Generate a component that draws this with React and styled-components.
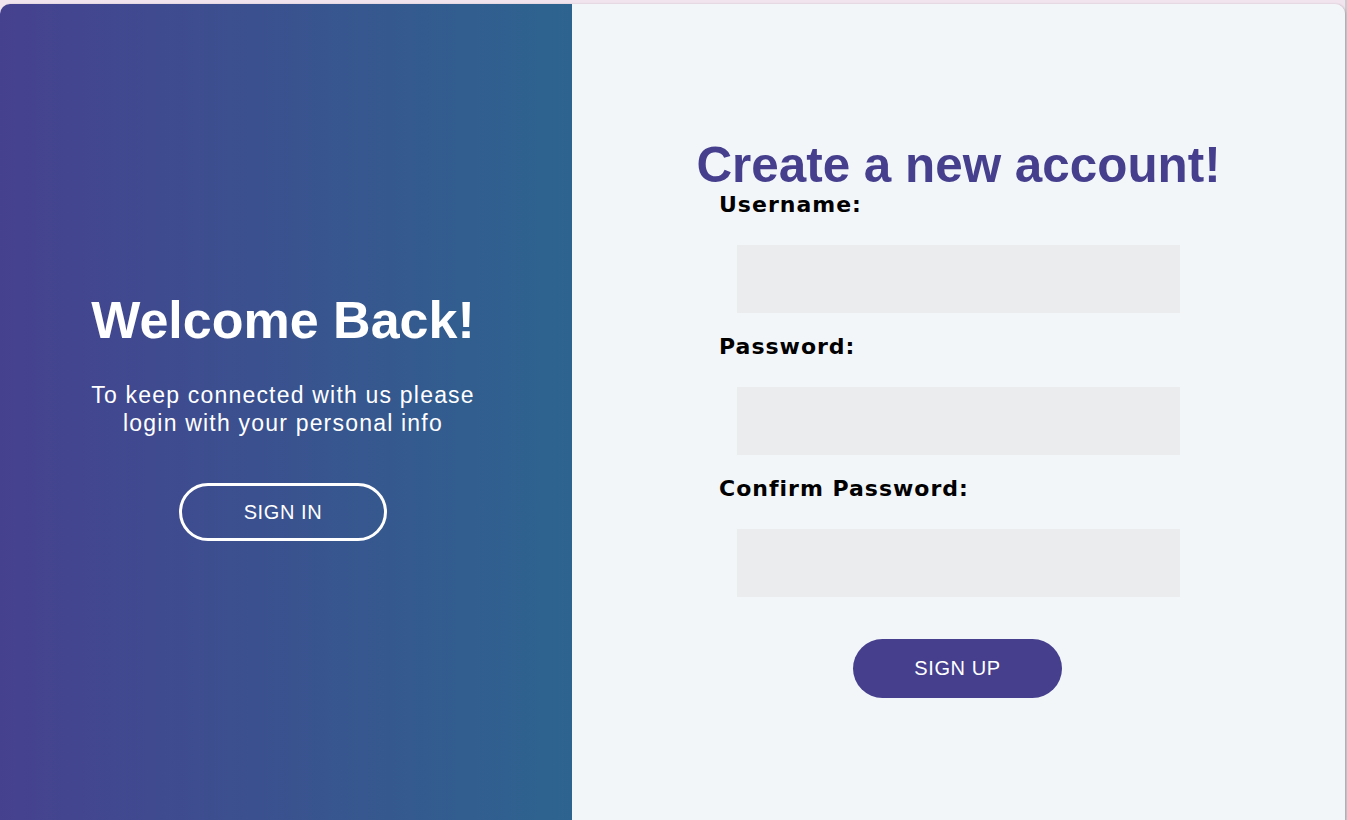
import React from "react";
import styled, { createGlobalStyle } from "styled-components";

const Global = createGlobalStyle`
  html, body { margin: 0; padding: 0; }
  body {
    background: #f2e4ef;
    overflow: hidden;
    font-family: "Liberation Sans", Arial, sans-serif;
  }
  * { box-sizing: border-box; }
`;

const Page = styled.div`
  padding-top: 4px;
  width: 1347px;
  height: 820px;
  background: linear-gradient(to right, #f2e4ef 0, #f2e4ef 1345px, #c9cccf 1345px);
`;

const Card = styled.div`
  width: 1345px;
  height: 825px;
  border-radius: 10px;
  overflow: hidden;
  display: grid;
  grid-template-columns: 572px 1fr;
  box-shadow: 1px 0 2px rgba(0, 0, 0, 0.18);
`;

const Overlay = styled.section`
  background: linear-gradient(to right, #46418f, #2d648f);
  color: #fff;
  display: flex;
  flex-direction: column;
  align-items: center;
  justify-content: center;
  padding-right: 6px;
  text-align: center;
`;

const Title = styled.h1`
  margin: 0 -40px;
  text-align: center;
  white-space: nowrap;
  font-family: "Liberation Sans", Arial, sans-serif;
  font-weight: 700;
  font-size: ${(p) => p.$size || 52}px;
  line-height: 57px;
  color: ${(p) => p.$color || "#fff"};
`;

const Lead = styled.p`
  margin: 32px 0 46px;
  font-size: 23px;
  line-height: 28px;
  letter-spacing: 1.2px;
  font-weight: 400;
`;

const PillButton = styled.button`
  width: ${(p) => p.$w}px;
  height: ${(p) => p.$h}px;
  border-radius: 30px;
  font-family: "Liberation Sans", Arial, sans-serif;
  font-size: 20px;
  letter-spacing: 0.6px;
  color: #fff;
  cursor: pointer;
  background: ${(p) => (p.$ghost ? "transparent" : "#453f8e")};
  border: ${(p) => (p.$ghost ? "3px solid #fff" : "none")};
  padding: 0;
`;

const FormPanel = styled.section`
  background: #f3f6f9;
  display: flex;
  flex-direction: column;
  align-items: center;
  justify-content: center;
`;

const Form = styled.form`
  width: 479px;
  display: flex;
  flex-direction: column;
`;

const Field = styled.div`
  display: flex;
  flex-direction: column;
  margin-bottom: 22px;
`;

const Label = styled.label`
  font-family: "DejaVu Sans", Verdana, sans-serif;
  font-weight: 700;
  font-size: 22px;
  line-height: 24px;
  color: #000;
  letter-spacing: 1px;
`;

const Input = styled.input`
  margin: 28px 18px 0;
  height: 68px;
  border: none;
  background: #ebecee;
  outline: none;
  padding: 0 15px;
  font-size: 18px;
`;

const ButtonRow = styled.div`
  display: flex;
  justify-content: center;
  margin-top: 20px;
  padding-right: 2px;
`;

export default function App() {
  return (
    <>
      <Global />
      <Page>
        <Card>
          <Overlay>
            <Title>Welcome Back!</Title>
            <Lead>
              To keep connected with us please
              <br />
              login with your personal info
            </Lead>
            <PillButton $ghost $w={208} $h={58}>SIGN IN</PillButton>
          </Overlay>
          <FormPanel>
            <Form onSubmit={(e) => e.preventDefault()}>
              <Title $color="#453f8e" $size={49.4}>Create a new account!</Title>
              <Field>
                <Label>Username:</Label>
                <Input type="text" />
              </Field>
              <Field>
                <Label>Password:</Label>
                <Input type="password" />
              </Field>
              <Field>
                <Label>Confirm Password:</Label>
                <Input type="password" />
              </Field>
              <ButtonRow>
                <PillButton $w={209} $h={59}>SIGN UP</PillButton>
              </ButtonRow>
            </Form>
          </FormPanel>
        </Card>
      </Page>
    </>
  );
}
